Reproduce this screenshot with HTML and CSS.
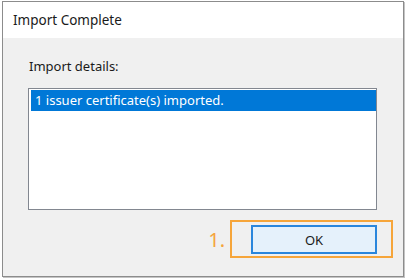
FILE: index.html
```html
<!DOCTYPE html>
<html>
<head>
<meta charset="utf-8">
<link rel="stylesheet" href="styles.css">
</head>
<body>
<div class="window">
  <div class="titlebar">Import Complete</div>
  <div class="content">
    <div class="label">Import details:</div>
    <div class="listbox">
      <div class="row selected">1 issuer certificate(s) imported.</div>
    </div>
    <div class="actions">
      <span class="step">1.</span>
      <div class="highlight">
        <button class="btn">OK</button>
      </div>
    </div>
  </div>
</div>
</body>
</html>
```

FILE: styles.css
```css
html, body {
  margin: 0;
  padding: 0;
  background: #ffffff;
}
body {
  width: 405px;
  height: 278px;
  overflow: hidden;
  font-family: "Noto Sans", "Open Sans", sans-serif;
  font-size: 13px;
  color: #1a1a1a;
}
.window {
  box-sizing: border-box;
  margin: 1px 0 0 2px;
  width: 402px;
  height: 276px;
  border: 1px solid #8c8c8c;
  box-shadow: 1px 1px 0 #c4c4c4;
  display: flex;
  flex-direction: column;
  background: #f0f0f0;
}
.titlebar {
  height: 36px;
  background: #ffffff;
  padding-left: 10px;
  display: flex;
  align-items: center;
  font-size: 13.5px;
  color: #1a1a1a;
}
.content {
  flex: 1;
  padding: 19px 25px 0 25px;
  display: flex;
  flex-direction: column;
}
.label {
  line-height: 18px;
  padding-left: 1px;
}
.listbox {
  margin-top: 13px;
  box-sizing: border-box;
  width: 349px;
  height: 122px;
  border: 1px solid #828790;
  background: #ffffff;
  padding: 1px 0 1px 2px;
}
.row {
  height: 21px;
  line-height: 21px;
  padding-left: 4px;
}
.row.selected {
  background: #0078d7;
  color: #ffffff;
}
.actions {
  margin-top: 10px;
  margin-right: -15px;
  display: flex;
  justify-content: flex-end;
  align-items: center;
  gap: 5px;
}
.step {
  color: #f5a43c;
  font-size: 20px;
  line-height: 20px;
  padding-top: 2px;
}
.highlight {
  box-sizing: border-box;
  width: 163px;
  height: 38px;
  border: 2px solid #f6a53a;
  padding: 3px 14px 2px 19px;
}
.btn {
  box-sizing: border-box;
  width: 126px;
  height: 29px;
  border: 2px solid #2a86dc;
  background: #e5f1fb;
  font-family: "Noto Sans", "Open Sans", sans-serif;
  font-size: 13px;
  color: #1a1a1a;
  padding: 0;
  margin: 0;
}
```
